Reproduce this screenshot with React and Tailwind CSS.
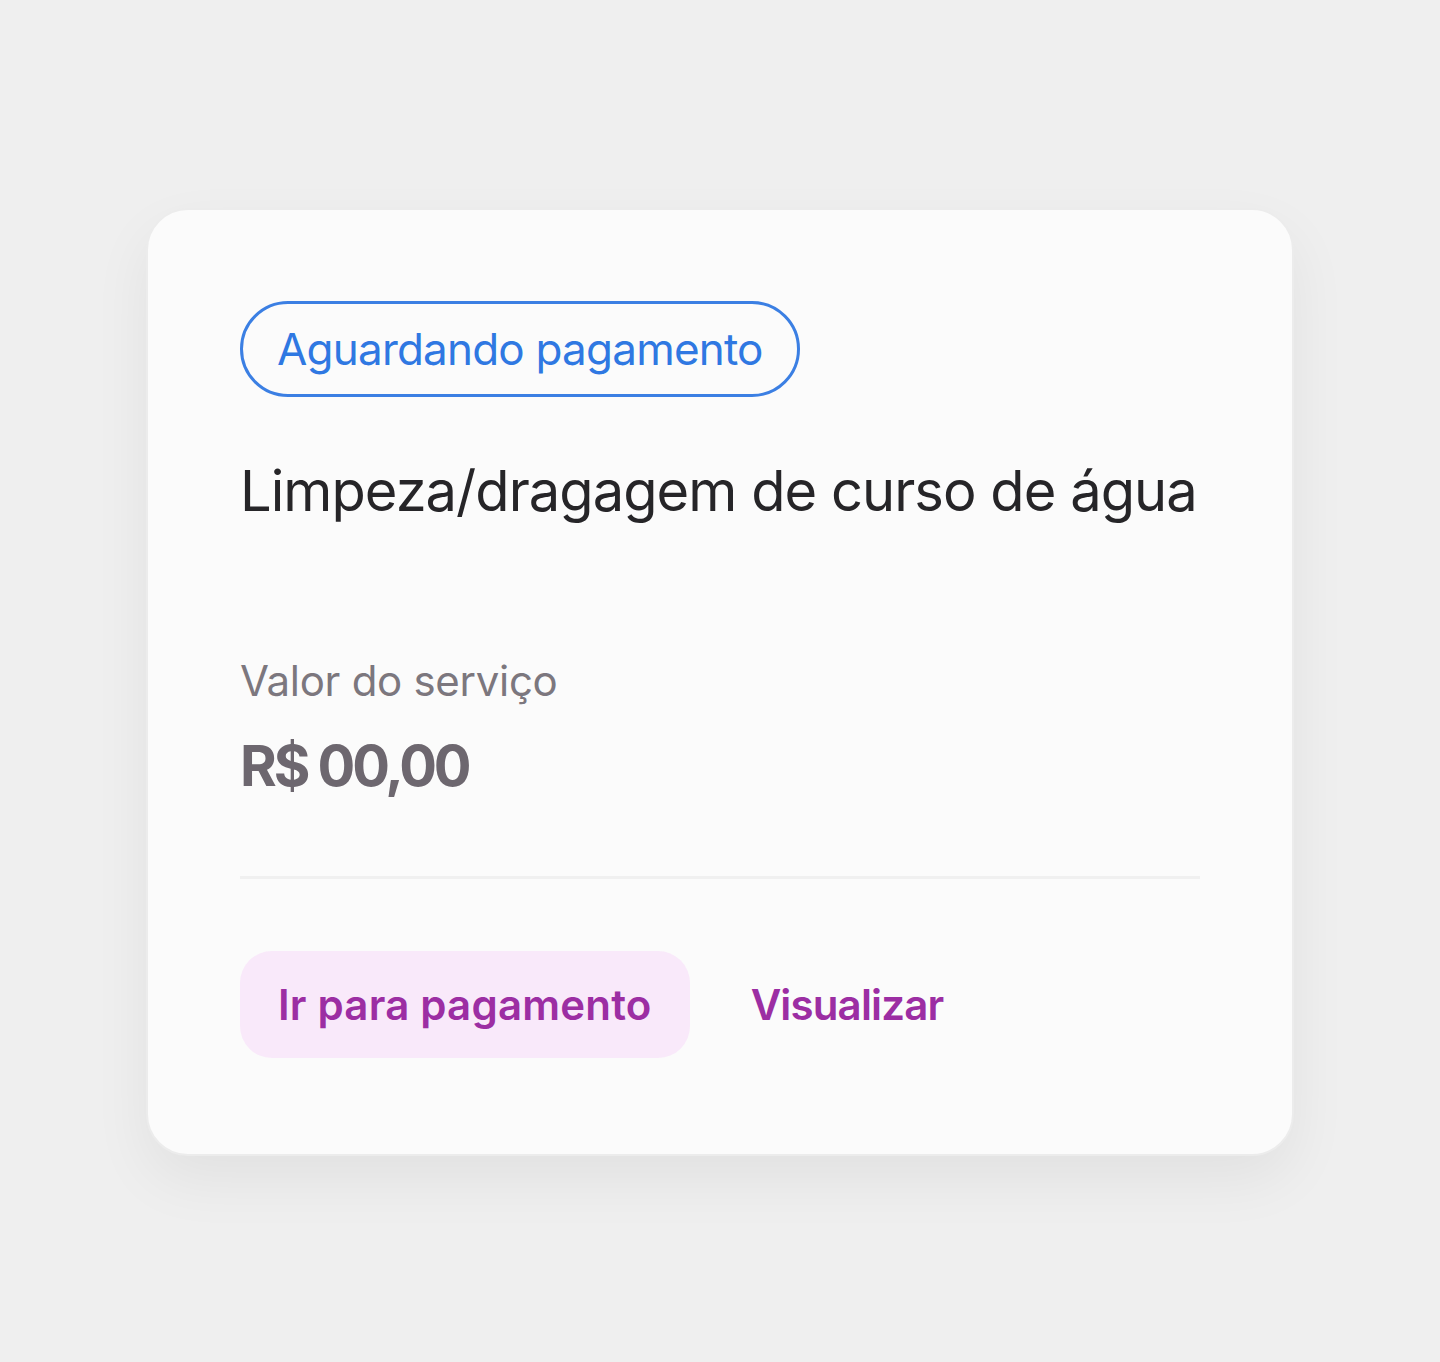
// Service card – awaiting payment

function StatusBadge({ children }) {
  return (
    <span className="inline-flex h-[96px] items-center rounded-full border-[3px] border-[#3b7fe3] px-[34px] text-[44px] font-normal tracking-[-0.018em] text-[#2f78e2]">
      {children}
    </span>
  );
}

export default function App() {
  return (
    <div
      className="flex min-h-[1362px] w-full items-start justify-center bg-[#efefef] pt-[208px]"
      style={{ fontFamily: 'Inter, "Noto Sans", sans-serif' }}
    >
      <div className="w-[1148px] rounded-[42px] border-2 border-[#ececec] bg-[#fbfbfb] px-[92px] pb-[96px] pt-[91px] shadow-[0_24px_60px_rgba(0,0,0,0.06)]">
        <div className="flex">
          <StatusBadge>Aguardando pagamento</StatusBadge>
        </div>

        <h1 className="mt-[60px] text-[56px] font-normal leading-[68px] tracking-[-0.017em] text-[#262528]">
          Limpeza/dragagem de curso de água
        </h1>

        <div className="mt-[131px]">
          <p className="text-[42px] leading-[50px] tracking-[-0.007em] text-[#7c777e]">Valor do serviço</p>
          <p className="mt-[30px] text-[56px] font-bold leading-[60px] tracking-[-0.055em] text-[#6d676f]">R$ 00,00</p>
        </div>

        <div className="mt-[80px] h-[3px] w-full bg-[#f0f0f0]" />

        <div className="mt-[72px] flex items-center gap-[61px]">
          <button className="h-[107px] rounded-[32px] bg-[#f9e9fa] px-[38px] text-[42px] font-semibold tracking-[0.005em] text-[#9c2ea3]">
            Ir para pagamento
          </button>
          <button className="text-[42px] font-semibold tracking-[-0.02em] text-[#9c2ea3]">Visualizar</button>
        </div>
      </div>
    </div>
  );
}
